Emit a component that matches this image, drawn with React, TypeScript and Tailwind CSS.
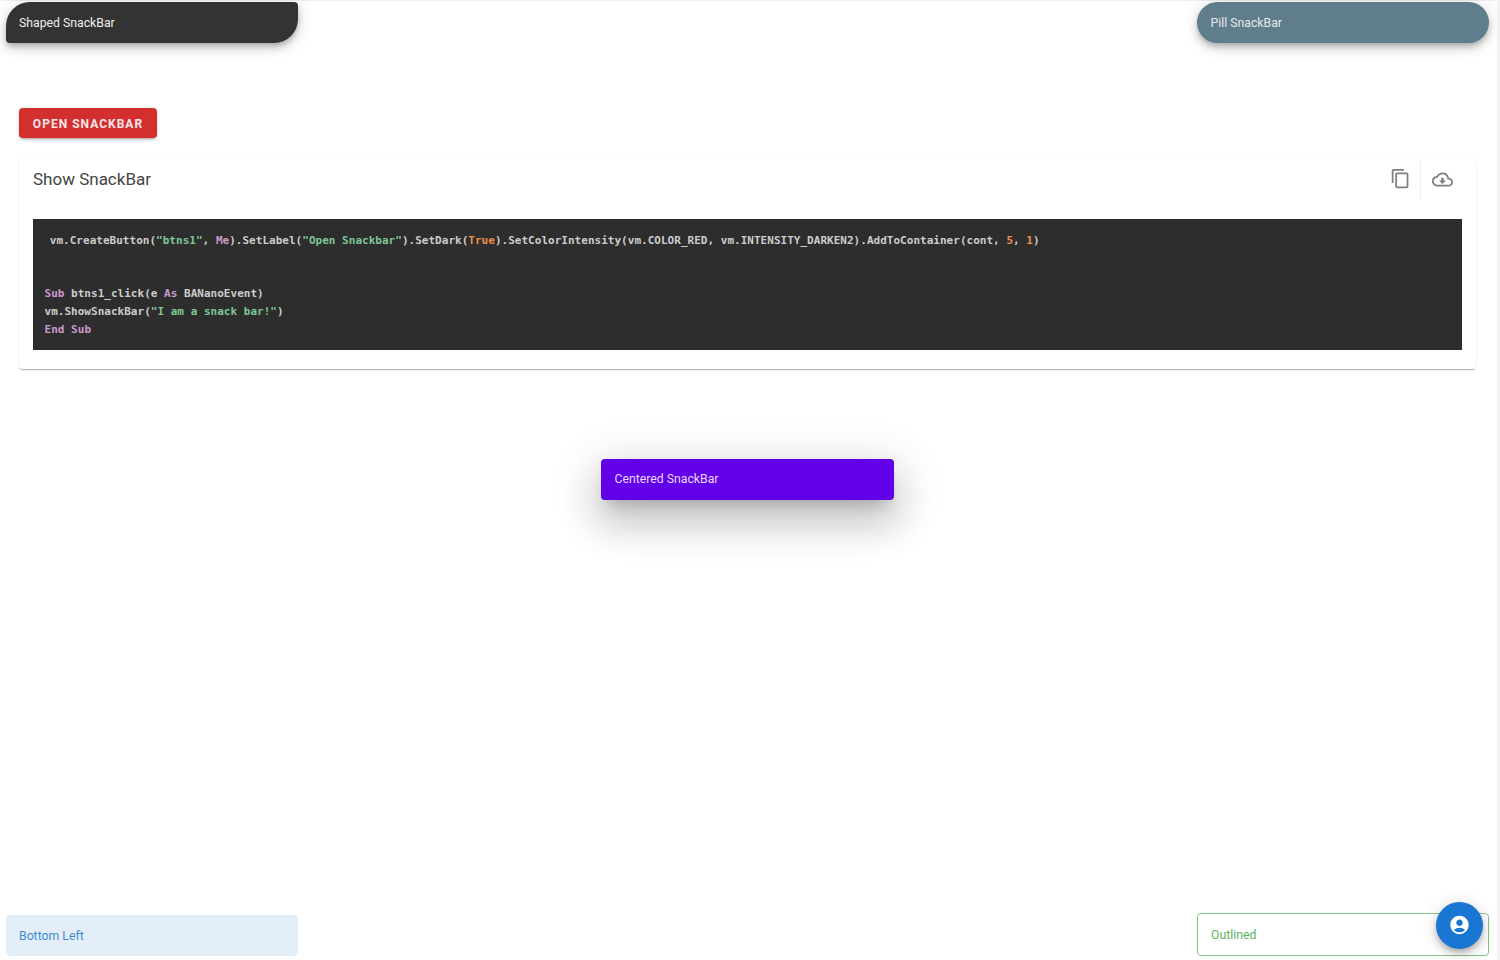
import React from "react";
import { MdContentCopy, MdOutlineCloudDownload, MdAccountCircle } from "react-icons/md";

const roboto = { fontFamily: "Roboto, 'Liberation Sans', sans-serif" };
const G = ({ children }: { children: React.ReactNode }) => <span className="text-[#7ec699]">{children}</span>;
const P = ({ children }: { children: React.ReactNode }) => <span className="text-[#cc99cd]">{children}</span>;
const O = ({ children }: { children: React.ReactNode }) => <span className="text-[#f08d49]">{children}</span>;

const snackShadow = "shadow-[0_3px_5px_-1px_rgba(0,0,0,0.2),0_6px_10px_0_rgba(0,0,0,0.14),0_1px_18px_0_rgba(0,0,0,0.12)]";

export default function App() {
  return (
    <div className="relative h-[960px] w-[1500px] overflow-hidden bg-white" style={roboto}>
      <div className="absolute inset-x-0 top-0 h-px bg-[#eeeeee]" />
      <div className="absolute inset-y-0 right-0 w-[3px] bg-[#f3f3f3]" />

      <main className="flex w-[1495px] flex-col items-start px-[19px] pt-[108px]">
        <button className="flex h-[30px] w-[138px] items-center justify-center rounded bg-[#d32f2f] pt-px text-[12px] font-bold tracking-[0.085em] text-[#f7e6e6] shadow-[0_2px_3px_-1px_rgba(0,0,0,0.3),0_1px_4px_0_rgba(0,0,0,0.14)]">
          OPEN SNACKBAR
        </button>

        <section className="mt-[21px] h-[210px] w-[1457px] rounded bg-white shadow-[0_2px_1px_-1px_rgba(0,0,0,0.2),0_1px_1px_0_rgba(0,0,0,0.1),0_1px_3px_0_rgba(0,0,0,0.08)]">
          <header className="flex h-[41px] items-center justify-between pl-[14px]">
            <h2 className="text-[17px] font-normal text-[#444444]">Show SnackBar</h2>
            <div className="flex h-full items-center text-[#808080]">
              <span className="flex h-full w-[40px] items-center justify-center">
                <MdContentCopy size={21} className="-translate-y-px" />
              </span>
              <span className="flex h-full w-[56px] items-center justify-center border-l border-[#eeeeee] pr-[13px]">
                <MdOutlineCloudDownload size={21} />
              </span>
            </div>
          </header>
          <pre
            className="mx-[14px] mt-[19px] h-[131px] bg-[#2d2d2d] pl-[11.5px] pt-[13px] text-[11px] font-bold leading-[17.7px] text-[#cccccc]"
            style={{ fontFamily: "'DejaVu Sans Mono', 'Liberation Mono', monospace", letterSpacing: "0.02px" }}
          >
            <span className="inline-block w-[5.3px]" />vm.CreateButton(<G>"btns1"</G>, <P>Me</P>).SetLabel(<G>"Open Snackbar"</G>).SetDark(<O>True</O>).SetColorIntensity(vm.COLOR_RED, vm.INTENSITY_DARKEN2).AddToContainer(cont, <O>5</O>, <O>1</O>)
            {"\n\n\n"}
            <P>Sub</P> btns1_click(e <P>As</P> BANanoEvent)
            {"\n"}vm.ShowSnackBar(<G>"I am a snack bar!"</G>)
            {"\n"}<P>End</P> <P>Sub</P>
          </pre>
        </section>
      </main>

      {/* Overlaid snackbars */}
      <div className={`absolute left-[6px] top-[2px] flex h-[41px] w-[292px] items-center rounded-tl-[24px] rounded-tr-[4px] rounded-br-[24px] rounded-bl-[4px] bg-[#333333] pl-[13px] pt-[2px] text-[12.25px] text-[#eeeeee] ${snackShadow}`}>
        Shaped SnackBar
      </div>
      <div className={`absolute left-[1197px] top-[2px] flex h-[41px] w-[292px] items-center rounded-full bg-[#607d8b] pl-[13.5px] pt-[2px] text-[12.25px] text-[#e4e9ec] ${snackShadow}`}>
        Pill SnackBar
      </div>
      <div className="absolute left-[601px] top-[459px] flex h-[41px] w-[293px] items-center rounded bg-[#6200ea] pl-[13.5px] text-[12.25px] text-[#ead9fb] shadow-[0_11px_15px_-7px_rgba(0,0,0,0.2),0_24px_38px_3px_rgba(0,0,0,0.14),0_9px_46px_8px_rgba(0,0,0,0.12)]">
        Centered SnackBar
      </div>
      <div className="absolute left-[6px] top-[915px] flex h-[41px] w-[292px] items-center rounded bg-[#e3eef9] pl-[13px] pt-px text-[12.25px] text-[#3f8ad3]">
        Bottom Left
      </div>
      <div className="absolute left-[1197px] top-[913px] flex h-[43px] w-[292px] items-center rounded border border-[#81c784] bg-white pl-[13px] pt-px text-[12.25px] text-[#5cb460]">
        Outlined
      </div>
      <button className={`absolute left-[1436px] top-[902px] flex h-[47px] w-[47px] items-center justify-center rounded-full bg-[#1976d2] text-white ${snackShadow}`}>
        <MdAccountCircle size={22} className="-translate-x-[0.5px] -translate-y-px" />
      </button>
    </div>
  );
}
